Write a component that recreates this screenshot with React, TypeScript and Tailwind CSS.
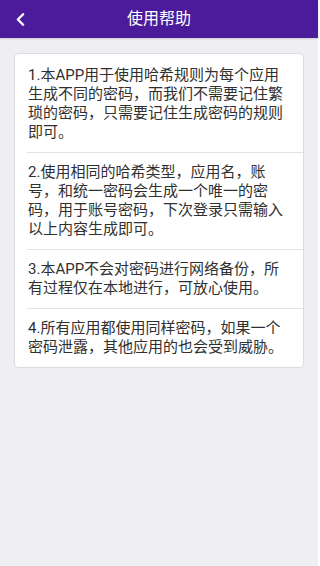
import { ChevronLeft } from "lucide-react";

export default function App() {
    const tips = [
        "1.本APP用于使用哈希规则为每个应用生成不同的密码，而我们不需要记住繁琐的密码，只需要记住生成密码的规则即可。",
        "2.使用相同的哈希类型，应用名，账号，和统一密码会生成一个唯一的密码，用于账号密码，下次登录只需输入以上内容生成即可。",
        "3.本APP不会对密码进行网络备份，所有过程仅在本地进行，可放心使用。",
        "4.所有应用都使用同样密码，如果一个密码泄露，其他应用的也会受到威胁。",
    ];

    return (
        <div className="w-[318px] h-[566px] bg-[#efeef3] font-['Roboto','Noto_Sans_CJK_SC',sans-serif]">
            <header className="h-[38px] bg-[#4b1b9b] flex items-center relative shadow-[0_1px_2px_rgba(0,0,0,0.15)]">
                <button className="absolute left-[10px] top-[9px] text-white">
                    <ChevronLeft size={21} strokeWidth={2.75} />
                </button>
                <h1 className="w-full text-center text-white text-[16px]">使用帮助</h1>
            </header>

            <div className="mx-[14px] mt-[15px] bg-white border border-[#dcdce0] rounded-[5px]">
                {tips.map((tip, i) => (
                    <div
                        key={i}
                        className={"ml-[12px] pl-[1px] pr-[13px] py-[10px] " + (i > 0 ? "border-t border-[#e2e2e6]" : "pt-[12px]")}
                    >
                        <p className="text-[15px] leading-[19px] text-[#303030]">{tip}</p>
                    </div>
                ))}
            </div>
        </div>
    );
}
